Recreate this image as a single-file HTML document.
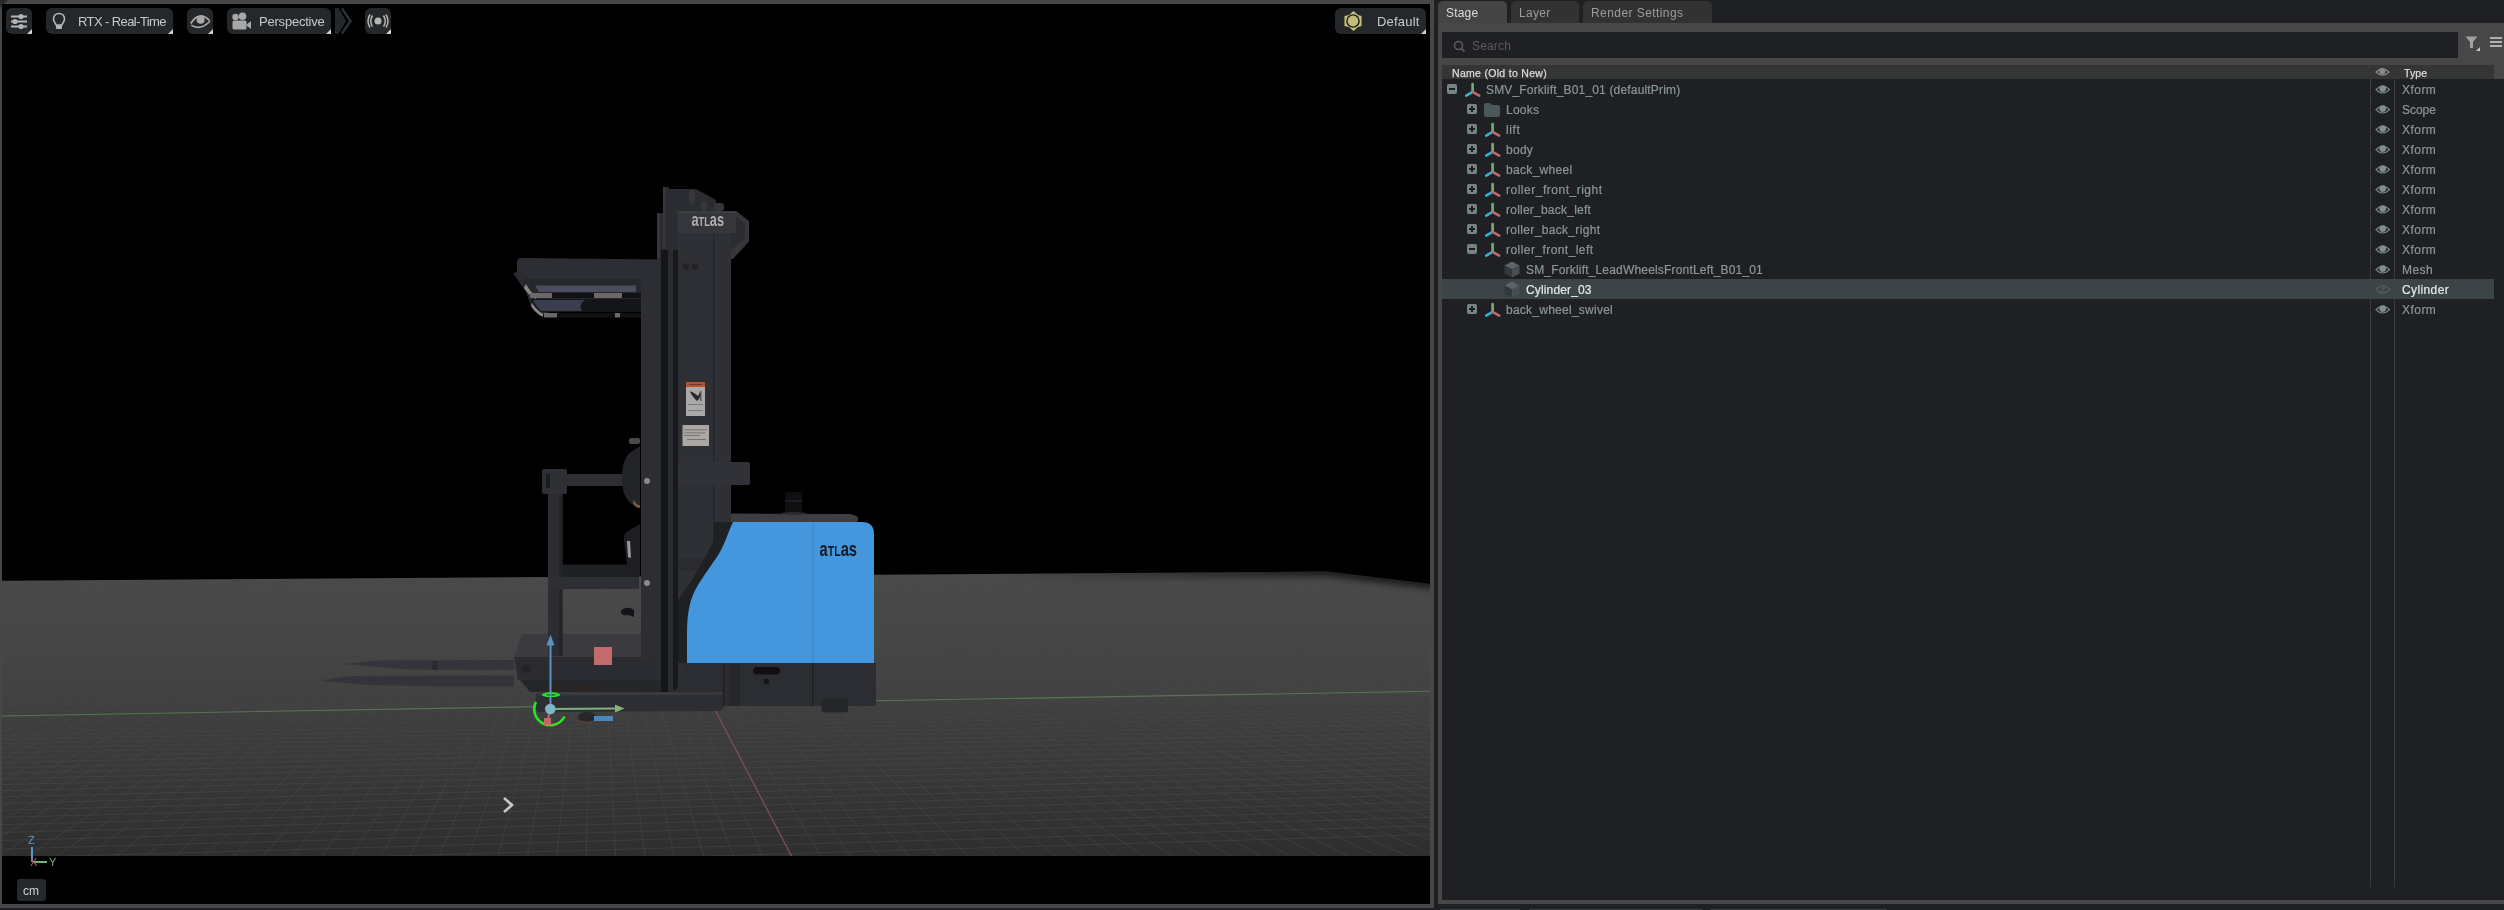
<!DOCTYPE html>
<html><head><meta charset="utf-8">
<style>
*{margin:0;padding:0;box-sizing:border-box}
html,body{width:2504px;height:910px;overflow:hidden;background:#1f2023;font-family:"Liberation Sans",sans-serif;-webkit-font-smoothing:antialiased}
.a{position:absolute}
span{will-change:transform}
#vpb{left:0;top:0;width:1434px;height:908px;background:#474747}
#vp{left:2px;top:4px;width:1428px;height:900px;background:#000;overflow:hidden}
#vp svg{position:absolute;left:0;top:0;will-change:transform}
.btn{position:absolute;top:8px;height:26px;background:#25282b;border-radius:6px}
.btn .tri{position:absolute;right:0;bottom:0;width:0;height:0;border-left:5px solid transparent;border-bottom:5px solid #d0d0d0}
.btxt{position:absolute;top:6px;font-size:13px;color:#c8c8c8;white-space:nowrap}
#pbord{left:1438px;top:23px;width:1066px;height:881px;background:#474747}
#pin{left:1442px;top:79px;width:1062px;height:821px;background:#1f2023}
.tab{position:absolute;top:1px;height:23px;border-radius:5px 5px 0 0;font-size:12px;color:#9c9c9c}
.tab span{position:absolute;top:5px}
#search{left:1442px;top:32px;width:1016px;height:26px;background:#1f2023}
#hdr{left:1442px;top:65px;width:1052px;height:14px;background:#343535}
.row{position:absolute;left:1442px;width:1052px;height:20px}
.rt{position:absolute;top:4px;font-size:12px;color:#8a9799;white-space:nowrap;-webkit-text-stroke:0.2px currentColor}
.ty{position:absolute;left:960px;top:4px;font-size:12px;color:#8a9799;-webkit-text-stroke:0.2px currentColor}
.box{position:absolute;top:5px;width:10px;height:10px;border-radius:2px;background:#768487}
.box:before{content:"";position:absolute;left:2px;top:4px;width:6px;height:2px;background:#1f2023}
.box.p:after{content:"";position:absolute;left:4px;top:2px;width:2px;height:6px;background:#1f2023}
.ic{position:absolute;top:2px}
.eye{position:absolute;left:932.5px;top:4.5px}
.sep{position:absolute;top:79px;width:1px;height:808px;background:#3a3b3d}
</style></head><body>
<div id="vpb" class="a"></div>
<svg class="a" style="left:0;top:0" width="10" height="10"><path d="M0 0 L8 0 L0 8 Z" fill="#2b2b2b"/></svg>
<div id="vp" class="a">
<svg width="1428" height="900" viewBox="2 4 1428 900">
<defs>
<linearGradient id="gg" x1="0" y1="572" x2="0" y2="856" gradientUnits="userSpaceOnUse">
<stop offset="0" stop-color="#4a4a4a"/><stop offset="0.35" stop-color="#444444"/><stop offset="1" stop-color="#2e2e2e"/>
</linearGradient>
<clipPath id="gc"><path d="M0 580.7 L1327 571.6 L1430 584 L1430 856 L0 856 Z"/></clipPath>
<linearGradient id="gmg" x1="0" y1="580" x2="0" y2="720" gradientUnits="userSpaceOnUse"><stop offset="0" stop-color="#000"/><stop offset="0.45" stop-color="#999"/><stop offset="1" stop-color="#fff"/></linearGradient>
<mask id="gm" maskUnits="userSpaceOnUse" x="0" y="0" width="1434" height="910"><rect x="0" y="0" width="1434" height="910" fill="url(#gmg)"/></mask>
<linearGradient id="edgeg" x1="1000" y1="0" x2="1330" y2="0" gradientUnits="userSpaceOnUse"><stop offset="0" stop-color="#000" stop-opacity="0"/><stop offset="1" stop-color="#000" stop-opacity="0.7"/></linearGradient>
<filter id="bl3" x="-10%" y="-200%" width="120%" height="500%"><feGaussianBlur stdDeviation="3.5"/></filter>
</defs>
<rect x="0" y="0" width="1434" height="910" fill="#000"/>
<path d="M0 580.7 L1327 571.6 L1430 584 L1430 856 L0 856 Z" fill="url(#gg)"/>
<g clip-path="url(#gc)">
<path d="M1000 574.8 L1327 571.6 L1440 585" fill="none" stroke="url(#edgeg)" stroke-width="9" filter="url(#bl3)"/>
<g mask="url(#gm)">
<path d="M0.9 580.7L-1684.6 856.0 M9.0 580.6L-1655.0 856.0 M17.1 580.6L-1625.4 856.0 M25.1 580.5L-1595.7 856.0 M33.1 580.5L-1566.1 856.0 M41.2 580.4L-1536.5 856.0 M49.2 580.4L-1506.9 856.0 M57.2 580.3L-1477.3 856.0 M65.2 580.3L-1447.7 856.0 M73.1 580.2L-1418.1 856.0 M81.1 580.1L-1388.5 856.0 M89.1 580.1L-1359.0 856.0 M97.0 580.0L-1329.4 856.0 M105.0 580.0L-1299.8 856.0 M112.9 579.9L-1270.2 856.0 M120.8 579.9L-1240.6 856.0 M128.7 579.8L-1211.1 856.0 M136.6 579.8L-1181.5 856.0 M144.5 579.7L-1151.9 856.0 M152.4 579.7L-1122.4 856.0 M160.3 579.6L-1092.8 856.0 M168.2 579.5L-1063.3 856.0 M176.0 579.5L-1033.7 856.0 M183.9 579.4L-1004.2 856.0 M191.7 579.4L-974.6 856.0 M199.5 579.3L-945.1 856.0 M207.3 579.3L-915.6 856.0 M215.1 579.2L-886.0 856.0 M222.9 579.2L-856.5 856.0 M230.7 579.1L-827.0 856.0 M238.5 579.1L-797.5 856.0 M246.3 579.0L-767.9 856.0 M254.0 579.0L-738.4 856.0 M261.8 578.9L-708.9 856.0 M269.5 578.9L-679.4 856.0 M277.3 578.8L-649.9 856.0 M285.0 578.7L-620.4 856.0 M292.7 578.7L-590.9 856.0 M300.4 578.6L-561.4 856.0 M308.1 578.6L-531.9 856.0 M315.8 578.5L-502.4 856.0 M323.4 578.5L-472.9 856.0 M331.1 578.4L-443.5 856.0 M338.8 578.4L-414.0 856.0 M346.4 578.3L-384.5 856.0 M354.0 578.3L-355.0 856.0 M361.7 578.2L-325.6 856.0 M369.3 578.2L-296.1 856.0 M376.9 578.1L-266.6 856.0 M384.5 578.1L-237.2 856.0 M392.1 578.0L-207.7 856.0 M399.7 578.0L-178.3 856.0 M407.2 577.9L-148.8 856.0 M414.8 577.9L-119.4 856.0 M422.3 577.8L-89.9 856.0 M429.9 577.8L-60.5 856.0 M437.4 577.7L-31.1 856.0 M444.9 577.6L-1.6 856.0 M452.5 577.6L27.8 856.0 M460.0 577.5L57.2 856.0 M467.5 577.5L86.6 856.0 M475.0 577.4L116.1 856.0 M482.4 577.4L145.5 856.0 M489.9 577.3L174.9 856.0 M497.4 577.3L204.3 856.0 M504.8 577.2L233.7 856.0 M512.3 577.2L263.1 856.0 M519.7 577.1L292.5 856.0 M527.1 577.1L321.9 856.0 M534.5 577.0L351.3 856.0 M542.0 577.0L380.7 856.0 M549.4 576.9L410.0 856.0 M556.7 576.9L439.4 856.0 M564.1 576.8L468.8 856.0 M571.5 576.8L498.2 856.0 M578.9 576.7L527.5 856.0 M586.2 576.7L556.9 856.0 M593.6 576.6L586.3 856.0 M600.9 576.6L615.6 856.0 M608.2 576.5L645.0 856.0 M615.6 576.5L674.3 856.0 M622.9 576.4L703.7 856.0 M630.2 576.4L733.0 856.0 M637.5 576.3L762.4 856.0 M644.7 576.3L791.7 856.0 M652.0 576.2L821.1 856.0 M659.3 576.2L850.4 856.0 M666.6 576.1L879.7 856.0 M673.8 576.1L909.1 856.0 M681.0 576.0L938.4 856.0 M688.3 576.0L967.7 856.0 M695.5 575.9L997.0 856.0 M702.7 575.9L1026.3 856.0 M709.9 575.8L1055.6 856.0 M717.1 575.8L1084.9 856.0 M724.3 575.7L1114.2 856.0 M731.5 575.7L1143.5 856.0 M738.7 575.6L1172.8 856.0 M745.8 575.6L1202.1 856.0 M753.0 575.5L1231.4 856.0 M760.1 575.5L1260.7 856.0 M767.3 575.4L1290.0 856.0 M774.4 575.4L1319.3 856.0 M781.5 575.3L1348.5 856.0 M788.7 575.3L1377.8 856.0 M795.8 575.2L1407.1 856.0 M802.9 575.2L1436.4 856.0 M810.0 575.1L1465.6 856.0 M817.0 575.1L1494.9 856.0 M824.1 575.0L1524.1 856.0 M831.2 575.0L1553.4 856.0 M838.2 575.0L1582.6 856.0 M845.3 574.9L1611.9 856.0 M852.3 574.9L1641.1 856.0 M859.3 574.8L1670.4 856.0 M866.4 574.8L1699.6 856.0 M873.4 574.7L1728.8 856.0 M880.4 574.7L1758.1 856.0 M887.4 574.6L1787.3 856.0 M894.4 574.6L1816.5 856.0 M901.4 574.5L1845.7 856.0 M908.3 574.5L1875.0 856.0 M915.3 574.4L1904.2 856.0 M922.3 574.4L1933.4 856.0 M929.2 574.3L1962.6 856.0 M936.2 574.3L1991.8 856.0 M943.1 574.2L2021.0 856.0 M950.0 574.2L2050.2 856.0 M956.9 574.1L2079.4 856.0 M963.8 574.1L2108.6 856.0 M970.8 574.0L2137.8 856.0 M977.6 574.0L2166.9 856.0 M984.5 573.9L2196.1 856.0 M991.4 573.9L2225.3 856.0 M998.3 573.9L2254.5 856.0 M1005.1 573.8L2283.6 856.0 M1012.0 573.8L2312.8 856.0 M1018.8 573.7L2342.0 856.0 M1025.7 573.7L2371.1 856.0 M1032.5 573.6L2400.3 856.0 M1039.3 573.6L2429.4 856.0 M1046.2 573.5L2458.6 856.0 M1053.0 573.5L2487.7 856.0 M1059.8 573.4L2516.9 856.0 M1066.5 573.4L2546.0 856.0 M1073.3 573.3L2575.2 856.0 M1080.1 573.3L2604.3 856.0 M1086.9 573.2L2633.4 856.0 M1093.6 573.2L2662.5 856.0 M1100.4 573.2L2691.7 856.0 M1107.1 573.1L2720.8 856.0 M1113.9 573.1L2749.9 856.0 M1120.6 573.0L2779.0 856.0 M1127.3 573.0L2808.1 856.0 M1134.0 572.9L2837.2 856.0 M1140.7 572.9L2866.3 856.0 M1147.4 572.8L2895.4 856.0 M1154.1 572.8L2924.5 856.0 M1160.8 572.7L2953.6 856.0 M1167.5 572.7L2982.7 856.0 M1174.2 572.6L3011.8 856.0 M1180.8 572.6L3040.9 856.0 M1187.5 572.6L3070.0 856.0 M1194.1 572.5L3099.0 856.0 M1200.8 572.5L3128.1 856.0 M1207.4 572.4L3157.2 856.0 M1214.0 572.4L3186.3 856.0 M1220.6 572.3L3215.3 856.0 M1227.2 572.3L3244.4 856.0 M1233.8 572.2L3273.4 856.0 M1240.4 572.2L3302.5 856.0 M1247.0 572.1L3331.5 856.0 M1253.6 572.1L3360.6 856.0 M1260.2 572.1L3389.6 856.0 M1266.7 572.0L3418.7 856.0 M1273.3 572.0L3447.7 856.0 M1279.8 571.9L3476.7 856.0 M1286.4 571.9L3505.8 856.0 M1292.9 571.8L3534.8 856.0 M1299.4 571.8L3563.8 856.0 M1305.9 571.7L3592.8 856.0 M1312.3 571.7L3621.9 856.0 M1342.3 574.5L3650.9 856.0 M1385.7 578.9L3679.9 856.0 M1431.2 583.4L3708.9 856.0" stroke="#4c4c4c" stroke-width="1" fill="none" opacity="0.5"/>
<path d="M0.0 696.7L1430.0 674.0 M0.0 693.7L1430.0 671.4 M0.0 690.9L1430.0 668.8 M0.0 688.1L1430.0 666.4 M0.0 685.4L1430.0 664.0 M0.0 682.8L1430.0 661.6 M0.0 680.2L1430.0 659.4 M0.0 677.7L1430.0 657.1 M0.0 675.3L1430.0 655.0 M0.0 672.9L1430.0 652.9 M0.0 670.6L1430.0 650.8 M0.0 668.4L1430.0 648.8 M0.0 666.2L1430.0 646.9 M0.0 664.0L1430.0 644.9" stroke="#4c4c4c" stroke-width="1" fill="none" opacity="0.12"/>
<path d="M0.0 731.1L1430.0 704.6 M0.0 727.2L1430.0 701.1 M0.0 723.3L1430.0 697.7 M0.0 719.7L1430.0 694.4 M0.0 716.1L1430.0 691.2 M0.0 712.6L1430.0 688.1 M0.0 709.2L1430.0 685.1 M0.0 705.9L1430.0 682.2 M0.0 702.8L1430.0 679.4 M0.0 699.7L1430.0 676.6" stroke="#4c4c4c" stroke-width="1" fill="none" opacity="0.25"/>
<path d="M0.0 757.7L1430.0 728.2 M0.0 752.8L1430.0 723.9 M0.0 748.2L1430.0 719.8 M0.0 743.7L1430.0 715.8 M0.0 739.4L1430.0 711.9 M0.0 735.2L1430.0 708.2" stroke="#4c4c4c" stroke-width="1" fill="none" opacity="0.38"/>
<path d="M0.0 877.2L1430.0 834.5 M0.0 867.4L1430.0 825.7 M0.0 858.0L1430.0 817.4 M0.0 849.1L1430.0 809.5 M0.0 840.6L1430.0 801.9 M0.0 832.5L1430.0 794.7 M0.0 824.7L1430.0 787.8 M0.0 817.3L1430.0 781.2 M0.0 810.2L1430.0 774.9 M0.0 803.4L1430.0 768.8 M0.0 796.8L1430.0 763.0 M0.0 790.6L1430.0 757.4 M0.0 784.6L1430.0 752.1 M0.0 778.8L1430.0 746.9 M0.0 773.2L1430.0 742.0 M0.0 767.8L1430.0 737.2 M0.0 762.6L1430.0 732.6" stroke="#4c4c4c" stroke-width="1" fill="none" opacity="0.50"/>
</g>
<line x1="0" y1="716" x2="1430" y2="691.2" stroke="#587458" stroke-width="1.1"/>
<line x1="712" y1="704" x2="791.5" y2="856" stroke="#80524d" stroke-width="1.2"/>
</g>
<!-- forks -->
<path d="M345 664 L378 660.5 L514 660 L514 670 L490 670 L408 669.5 L378 667 Z" fill="#34343a"/>
<path d="M321 680.5 L350 676 L514 675.5 L514 686.5 L440 686.5 L370 685 Z" fill="#33333a"/>
<path d="M432 661 L438 661 L438 670 L432 670 Z" fill="#2a2a2f"/>
<!-- platform underside / mechanism -->
<path d="M520 680 L662 680 L662 692 L530 692 Z" fill="#25262a"/>
<!-- operator platform -->
<path d="M522 634 L662 634 L662 657 L514 657 Z" fill="#3a3a3f"/>
<path d="M514 657 L662 657 L662 680 L518 680 Z" fill="#2b2c31"/>
<circle cx="526" cy="669" r="4" fill="#222327"/>
<!-- canopy -->
<path d="M521 258 L661 259.5 L661 279 L519 279 Q516 278 517 270 L517 263 Q517 258 521 258 Z" fill="#2d2e34"/>
<path d="M513 273 L523 271 L540 300 L548 313 L541 316 L531 306 L526 292 Z" fill="#2a2b30"/>
<path d="M523 279 L641 279 L641 300 L536 300 Q528 295 523 283 Z" fill="#27282e"/>
<path d="M535 285.5 L636 285.5 L636 292 L539 292 Z" fill="#4b4d5e"/>
<path d="M526 284 Q530 292 536 296 L536 299 Q529 296 524 288 Z" fill="#8a8888"/>
<rect x="530" y="293" width="22" height="5" fill="#6a6868"/>
<rect x="552" y="293" width="42" height="5" fill="#111114"/>
<rect x="594" y="293" width="28" height="5" fill="#6a6868"/>
<rect x="622" y="293" width="19" height="5" fill="#111114"/>
<path d="M531 299 L641 299 L641 312 L541 312 Q535 306 531 301 Z" fill="#141519"/>
<path d="M533 300 L585 300 Q578 305 582 311 L541 311 Q536 306 533 301 Z" fill="#3a3d4e"/>
<path d="M532 303 Q536 310 543 314 L543 317 Q535 313 531 306 Z" fill="#8a8888"/>
<rect x="544" y="313" width="13" height="4.5" fill="#6a6868"/>
<rect x="557" y="313" width="58" height="4.5" fill="#111114"/>
<rect x="615" y="313" width="5" height="4.5" fill="#6a6868"/>
<rect x="620" y="313" width="21" height="4.5" fill="#111114"/>
<!-- canopy post -->
<rect x="641" y="279" width="20" height="379" fill="#2d2e33"/>
<!-- gate -->
<rect x="562" y="564.5" width="77" height="12.5" fill="#1f2024"/>
<rect x="548" y="492" width="14.5" height="164" fill="#2c2d32"/>
<rect x="559" y="492" width="3.5" height="164" fill="#232428"/>
<rect x="548" y="577" width="91" height="12" fill="#2e2f34"/>
<rect x="542" y="474" width="97" height="12" fill="#2e2f34"/>
<rect x="542" y="469" width="25" height="25" rx="2" fill="#2f3035"/>
<rect x="546" y="474" width="4" height="14" fill="#1a1b1f"/>
<circle cx="647" cy="481" r="3" fill="#8a8a8a"/>
<circle cx="647" cy="583" r="3" fill="#8a8a8a"/>
<!-- seat/backrest -->
<path d="M640 446 L631 452 Q622 458 622 478 Q622 498 633 505 L640 507 Z" fill="#232428"/>
<rect x="629" y="438" width="11" height="6" rx="2" fill="#4a4a4e"/>
<path d="M634 500 Q637 506 640 505 L640 508 Q635 508 633 503 Z" fill="#7a5a3a"/>
<path d="M640 524 L628 531 Q623 534 624 540 L628 572 L640 576 Z" fill="#1e1f23"/>
<path d="M627 541 L630 541 L631 558 L628 557 Z" fill="#9a9a9a"/>
<path d="M621 611 Q624 607 630 608 L634 610 L634 617 L628 615 Q623 616 621 613 Z" fill="#141518"/>
<!-- mast -->
<path d="M657 213 L663 213 L663 187 L669 187 L669 189 L696 189 L716 200 L716 211 L736 211 L749 221 L749 241 L733 259 L731 259 L731 692 L662 692 L662 660 L657 660 Z" fill="#2b2c31"/>
<rect x="661" y="250" width="7" height="442" fill="#141518"/>
<rect x="668" y="250" width="5" height="442" fill="#2a2b30"/>
<rect x="673" y="250" width="5" height="440" fill="#18191c"/>
<rect x="657" y="213" width="3" height="45" fill="#35363b"/>
<rect x="663" y="187" width="2.5" height="60" fill="#36373c"/>
<rect x="689" y="190" width="6" height="14" rx="3" fill="#36373c"/>
<rect x="701" y="202" width="6" height="10" rx="3" fill="#36373c"/>
<rect x="714" y="203" width="10" height="8" rx="3" fill="#34353a"/>
<path d="M736 211 L749 221.5 L749 241.5 L733 258.5 L731 258.5 L731 250 L745 238 L745 224 L736 216 Z" fill="#36373c"/>
<rect x="678" y="233" width="53" height="459" fill="#2f3035"/>
<rect x="713" y="233" width="1.2" height="330" fill="#23242a"/>
<rect x="677.5" y="211.5" width="58.5" height="21.5" fill="#35363b"/>
<rect x="677.5" y="211.5" width="58.5" height="1.2" fill="#45464b"/>
<text x="691.5" y="226" font-family="Liberation Sans" font-weight="bold" fill="#b0b0b0" textLength="32.5" lengthAdjust="spacingAndGlyphs"><tspan font-size="19">a</tspan><tspan font-size="13.7">TL</tspan><tspan font-size="19">as</tspan></text>
<circle cx="686" cy="266.5" r="3.3" fill="#222327"/>
<circle cx="695" cy="266.5" r="3.3" fill="#222327"/>
<!-- labels -->
<rect x="686" y="382" width="19" height="34" fill="#a9a9a9"/>
<rect x="686" y="382" width="19" height="5" fill="#b5542c"/>
<rect x="689" y="384" width="13" height="1" fill="#3a2a20" opacity="0.6"/>
<path d="M690 391 L694 393 L698 396 L700 392 L701 394 L699 399 L697 401 L694 398 L691 394 Z" fill="#2a2a2a"/>
<rect x="700" y="391" width="1.5" height="10" fill="#555"/>
<rect x="688" y="404" width="15" height="1" fill="#7a7a7a"/>
<rect x="688" y="410" width="15" height="1" fill="#7a7a7a"/>
<rect x="682.5" y="425" width="26.5" height="21" fill="#aba7a3"/>
<rect x="684" y="429.5" width="23" height="0.8" fill="#6a6a6a"/>
<rect x="684" y="432.5" width="21" height="0.8" fill="#6a6a6a"/>
<rect x="684" y="435" width="16" height="0.8" fill="#6a6a6a"/>
<rect x="687" y="439" width="19" height="0.8" fill="#6a6a6a"/>
<!-- cross bracket -->
<rect x="678" y="462" width="72" height="23" rx="2" fill="#313237"/>
<rect x="678" y="558" width="43" height="13" fill="#2a2b30"/>
<!-- blue body top & knob -->
<path d="M731 513.5 L850 514 Q860 516 858 520 L857 522 L731 522 Z" fill="#3e3e42"/>
<rect x="785" y="492" width="17" height="21" rx="3" fill="#0f0f12"/>
<rect x="785" y="500" width="17" height="2" fill="#1e1e22"/>
<ellipse cx="793.5" cy="513.5" rx="13" ry="1.5" fill="#2a2b30"/>
<!-- base -->
<path d="M685 663 L876 663 L876 706 L724 706 L724 708 L676 708 L676 691 Z" fill="#2c2d32"/>
<rect x="729" y="664" width="11" height="42" fill="#26272b"/>
<path d="M714 522 L733 522 C729 530 726 541 720 552 C714 562 708 569 698 585 C690 598 687 612 687 635 L687 663 L678 663 L678 600 Q700 570 714 540 Z" fill="#1f2024"/>
<rect x="723" y="664" width="1.5" height="42" fill="#1e1f23"/>
<rect x="812" y="664" width="1.5" height="42" fill="#1e1f23"/>
<rect x="753" y="667" width="27" height="7.5" rx="3.7" fill="#0e0f12"/>
<circle cx="766.4" cy="681.4" r="2.8" fill="#141518"/>
<rect x="821.5" y="698.5" width="26.5" height="14" rx="3" fill="#25262a"/>
<!-- blue body -->
<path d="M733 522 L862 522 Q874 522 874 534 L874 663 L687 663 L687 635 C687 612 690 598 698 585 C708 569 714 562 720 552 C726 541 729 530 733 522 Z" fill="#4497dd"/>
<rect x="812.5" y="522" width="1.2" height="141" fill="#3a86c8"/>
<text x="819.5" y="555.7" font-family="Liberation Sans" font-weight="bold" fill="#141922" textLength="37.5" lengthAdjust="spacingAndGlyphs"><tspan font-size="20.5">a</tspan><tspan font-size="14.8">TL</tspan><tspan font-size="20.5">as</tspan></text>
<!-- wheels -->
<ellipse cx="554" cy="688" rx="9" ry="4" fill="#2a241f"/>
<ellipse cx="587" cy="688" rx="9" ry="4" fill="#2a241f"/>
<ellipse cx="587" cy="717" rx="9" ry="5" fill="#26272b"/>
<path d="M580 721 Q587 724 594 721" fill="none" stroke="#5a4330" stroke-width="1"/>
<!-- outrigger leg -->
<path d="M538 693 L722 692 L722 711 L540 712 Q536 712 536 708 L536 697 Q536 693 538 693 Z" fill="#2d2e33"/>
<path d="M538 693 L722 692 L722 694.5 L537 695.5 Z" fill="#3a3b40"/>

<!-- gizmo -->
<path d="M536 702 A15.5 15.5 0 1 0 564.5 716.5" fill="none" stroke="#22e822" stroke-width="2.6"/>
<path d="M542.5 695 Q551 691 559.5 695" fill="none" stroke="#22e822" stroke-width="2.2"/>
<path d="M542.5 695 Q551 698 559.5 695" fill="none" stroke="#22e822" stroke-width="1.5"/>
<line x1="550.5" y1="644" x2="550.5" y2="709" stroke="#5b93c2" stroke-width="2"/>
<path d="M546.5 645.5 L550.5 634.5 L554.5 645.5 Z" fill="#5b93c2"/>
<line x1="550" y1="709" x2="616" y2="708.5" stroke="#84b07c" stroke-width="1.8"/>
<path d="M615 704.5 L624.5 708.5 L615 712.5 Z" fill="#84b07c"/>
<rect x="544" y="718" width="7" height="7" fill="#c26868"/>
<line x1="550" y1="710" x2="548" y2="719" stroke="#c26868" stroke-width="1.8"/>
<circle cx="550.3" cy="709" r="5.3" fill="#7bb7c6"/>
<rect x="594" y="716" width="19" height="5" fill="#4a87bb"/>
<!-- red box on platform -->
<rect x="594" y="647" width="18" height="18" fill="#c36a6a"/>

<!-- chevron -->
<path d="M504 798 L512 805 L504 812" fill="none" stroke="#c8c8c8" stroke-width="2.6"/>
<!-- axis gizmo -->
<text x="28" y="843.5" font-size="11" fill="#5b93c7" font-family="Liberation Sans">Z</text>
<rect x="31" y="847" width="2" height="15" fill="#5b93c7"/>
<rect x="33" y="861" width="14" height="2" fill="#78b070"/>
<text x="49" y="866" font-size="11" fill="#78b070" font-family="Liberation Sans">Y</text>
<text x="30" y="866" font-size="11" fill="#c06060" font-family="Liberation Sans">X</text>
<rect x="17" y="879" width="29" height="22" rx="3" fill="#25292c"/>
<text x="23" y="895" font-size="12" fill="#d0d0d0" font-family="Liberation Sans">cm</text>
</svg>
</div>

<!-- toolbar -->
<div class="btn" style="left:6px;width:26px"><div class="tri"></div>
<svg class="a" style="left:4px;top:5px" width="18" height="16" viewBox="0 0 18 16"><g fill="#b4b4b4"><rect x="1" y="2.5" width="16" height="2"/><rect x="1" y="7.5" width="16" height="2"/><rect x="1" y="12.5" width="16" height="2"/><circle cx="11" cy="3.5" r="2.6"/><circle cx="5" cy="8.5" r="2.6"/><circle cx="11" cy="13.5" r="2.6"/></g></svg></div>
<div class="btn" style="left:46px;width:127px"><div class="tri"></div>
<svg class="a" style="left:5px;top:4px" width="16" height="19" viewBox="0 0 16 19"><path d="M8 1.5 C4.5 1.5 2.5 4 2.5 7 C2.5 9.5 4.5 11 5 13 L11 13 C11.5 11 13.5 9.5 13.5 7 C13.5 4 11.5 1.5 8 1.5 Z" fill="none" stroke="#b4b4b4" stroke-width="1.6"/><rect x="5" y="13" width="6" height="4" rx="1" fill="#b4b4b4"/></svg>
<span class="btxt" style="left:32px;letter-spacing:-0.59px">RTX - Real-Time</span></div>
<div class="btn" style="left:187px;width:26px"><div class="tri"></div>
<svg class="a" style="left:0;top:0" width="26" height="26" viewBox="0 0 26 26"><circle cx="13.6" cy="11.8" r="4" fill="#a8a8a8"/><path d="M3.8 15.5 Q12 2 22.6 12.6" fill="none" stroke="#a8a8a8" stroke-width="1.8"/><path d="M4.2 17.2 Q13 23 23 13.2" fill="none" stroke="#a8a8a8" stroke-width="1.6"/></svg></div>
<div class="btn" style="left:227px;width:104px"><div class="tri"></div>
<svg class="a" style="left:3px;top:4px" width="22" height="19" viewBox="0 0 22 19"><circle cx="5.5" cy="5" r="3.2" fill="#a8a8a8"/><circle cx="12.5" cy="4.3" r="3.8" fill="#a8a8a8"/><rect x="2.5" y="8.5" width="14" height="9" rx="1.5" fill="#a8a8a8"/><path d="M16 13 L21 9 L21 17 Z" fill="#a8a8a8"/></svg>
<span class="btxt" style="left:32px;letter-spacing:-0.21px">Perspective</span></div>
<svg class="a" style="left:334px;top:8px" width="20" height="26" viewBox="0 0 20 26"><path d="M1 0 L4.5 0 L12 13 L4.5 26 L1 26 Z" fill="#25282b"/><path d="M8 0.5 L16.5 13 L8 25.5" fill="none" stroke="#2c2f32" stroke-width="2.6"/></svg>
<div class="btn" style="left:365px;width:26px"><div class="tri"></div>
<svg class="a" style="left:2px;top:6px" width="22" height="14" viewBox="0 0 22 14"><circle cx="11" cy="7" r="3.5" fill="#b4b4b4"/><path d="M5.5 1.5 Q2 7 5.5 12.5 M16.5 1.5 Q20 7 16.5 12.5 M3 0.5 Q-1 7 3 13.5 M19 0.5 Q23 7 19 13.5" fill="none" stroke="#b4b4b4" stroke-width="1.5"/></svg></div>
<div class="btn" style="left:1335px;width:91px"><div class="tri"></div>
<svg class="a" style="left:8px;top:2px" width="20" height="22" viewBox="0 0 20 22"><path d="M10.5 1 L15 5 L18.5 6 L18.5 16 L15 17 L10.5 21 L6 17 L1.5 16 L1.5 6 L6 5 Z" fill="#c9c27a"/><circle cx="10" cy="11" r="6.8" fill="#1a1c1e"/><circle cx="10" cy="11" r="5.4" fill="#c2bc78"/></svg>
<span class="btxt" style="left:42px;letter-spacing:0.19px">Default</span></div>

<!-- panel -->
<div class="tab" style="left:1438px;width:69px;background:#444444;color:#dcdcdc"><span style="left:8px;letter-spacing:0.2px">Stage</span></div>
<div class="tab" style="left:1511px;width:68px;background:#323232"><span style="left:8px;letter-spacing:0.28px">Layer</span></div>
<div class="tab" style="left:1583px;width:129px;background:#323232"><span style="left:8px;letter-spacing:0.43px">Render Settings</span></div>
<div id="pbord" class="a"></div>
<div id="pin" class="a"></div>
<div id="search" class="a"></div>
<div id="hdr" class="a"></div>
<div class="sep" style="left:2370px"></div><div class="sep" style="left:2394px"></div>
<svg class="a" style="left:1453px;top:40px" width="13" height="13" viewBox="0 0 13 13"><circle cx="5.5" cy="5.5" r="4" fill="none" stroke="#5a5a5a" stroke-width="1.6"/><line x1="8.5" y1="8.5" x2="11.5" y2="11.5" stroke="#5a5a5a" stroke-width="1.8"/></svg>
<span class="a" style="left:1472px;top:39px;font-size:12px;color:#5a5a5a;letter-spacing:0.17px">Search</span>
<svg class="a" style="left:2465px;top:36px" width="16" height="15" viewBox="0 0 16 15"><path d="M0.5 0.5 L12.5 0.5 L8 6 L8 12 L5 12 L5 6 Z" fill="#a0a0a0"/><path d="M15 11 L15 15 L11 15 Z" fill="#c8c8c8"/></svg>
<svg class="a" style="left:2490px;top:37px" width="12" height="10" viewBox="0 0 12 10"><rect y="0" width="12" height="2" fill="#b0b0b0"/><rect y="4" width="12" height="2" fill="#b0b0b0"/><rect y="8" width="12" height="2" fill="#b0b0b0"/></svg>
<span class="a" style="left:1452px;top:67px;font-size:10.5px;color:#dedede;letter-spacing:0.3px;-webkit-text-stroke:0.25px #dedede">Name (Old to New)</span>
<svg class="a" style="left:2375px;top:67px" width="15" height="10" viewBox="0 0 15 10"><path d="M1 5 Q7.5 -1.2 14 5 Q7.5 11.2 1 5 Z" fill="none" stroke="#8a8a8a" stroke-width="1.1"/><circle cx="7.3" cy="4.2" r="3.1" fill="#8a8a8a"/></svg>
<span class="a" style="left:2404px;top:67px;font-size:10.5px;color:#dedede;letter-spacing:0.1px;-webkit-text-stroke:0.25px #dedede">Type</span>
<div class="row" style="top:79px;"><div class="box" style="left:5px"></div><svg class="ic" style="left:21px" width="18" height="18" viewBox="0 0 18 18"><g stroke-width="2.6" stroke-linecap="round"><line x1="9.6" y1="10.8" x2="9.6" y2="3" stroke="#74b07c"/><line x1="9.6" y1="10.8" x2="3.2" y2="14.6" stroke="#35b1d5"/><line x1="9.6" y1="10.8" x2="16.2" y2="14.6" stroke="#c4686a"/></g></svg><span class="rt" style="left:44px;color:#8a9799;letter-spacing:0.17px">SMV_Forklift_B01_01 (defaultPrim)</span><svg class="eye" width="16" height="11" viewBox="0 0 16 11"><path d="M1 5.6 Q7.5 -1.2 14.5 5.6 Q7.5 12.4 1 5.6 Z" fill="none" stroke="#7f8e91" stroke-width="1.2"/><circle cx="7.7" cy="4.6" r="3.4" fill="#7f8e91"/></svg><span class="ty" style="color:#8a9799;letter-spacing:0.46px">Xform</span></div>
<div class="row" style="top:99px;"><div class="box p" style="left:25px"></div><svg class="ic" style="left:41px;top:3px" width="18" height="16" viewBox="0 0 18 16"><path d="M1 3 Q1 1 3 1 L7 1 L9 3 L15 3 Q17 3 17 5 L17 13 Q17 15 15 15 L3 15 Q1 15 1 13 Z" fill="#4b585b"/></svg><span class="rt" style="left:64px;color:#8a9799;letter-spacing:0.22px">Looks</span><svg class="eye" width="16" height="11" viewBox="0 0 16 11"><path d="M1 5.6 Q7.5 -1.2 14.5 5.6 Q7.5 12.4 1 5.6 Z" fill="none" stroke="#7f8e91" stroke-width="1.2"/><circle cx="7.7" cy="4.6" r="3.4" fill="#7f8e91"/></svg><span class="ty" style="color:#8a9799;letter-spacing:-0.04px">Scope</span></div>
<div class="row" style="top:119px;"><div class="box p" style="left:25px"></div><svg class="ic" style="left:41px" width="18" height="18" viewBox="0 0 18 18"><g stroke-width="2.6" stroke-linecap="round"><line x1="9.6" y1="10.8" x2="9.6" y2="3" stroke="#74b07c"/><line x1="9.6" y1="10.8" x2="3.2" y2="14.6" stroke="#35b1d5"/><line x1="9.6" y1="10.8" x2="16.2" y2="14.6" stroke="#c4686a"/></g></svg><span class="rt" style="left:64px;color:#8a9799;letter-spacing:0.58px">lift</span><svg class="eye" width="16" height="11" viewBox="0 0 16 11"><path d="M1 5.6 Q7.5 -1.2 14.5 5.6 Q7.5 12.4 1 5.6 Z" fill="none" stroke="#7f8e91" stroke-width="1.2"/><circle cx="7.7" cy="4.6" r="3.4" fill="#7f8e91"/></svg><span class="ty" style="color:#8a9799;letter-spacing:0.46px">Xform</span></div>
<div class="row" style="top:139px;"><div class="box p" style="left:25px"></div><svg class="ic" style="left:41px" width="18" height="18" viewBox="0 0 18 18"><g stroke-width="2.6" stroke-linecap="round"><line x1="9.6" y1="10.8" x2="9.6" y2="3" stroke="#74b07c"/><line x1="9.6" y1="10.8" x2="3.2" y2="14.6" stroke="#35b1d5"/><line x1="9.6" y1="10.8" x2="16.2" y2="14.6" stroke="#c4686a"/></g></svg><span class="rt" style="left:64px;color:#8a9799;letter-spacing:0.28px">body</span><svg class="eye" width="16" height="11" viewBox="0 0 16 11"><path d="M1 5.6 Q7.5 -1.2 14.5 5.6 Q7.5 12.4 1 5.6 Z" fill="none" stroke="#7f8e91" stroke-width="1.2"/><circle cx="7.7" cy="4.6" r="3.4" fill="#7f8e91"/></svg><span class="ty" style="color:#8a9799;letter-spacing:0.46px">Xform</span></div>
<div class="row" style="top:159px;"><div class="box p" style="left:25px"></div><svg class="ic" style="left:41px" width="18" height="18" viewBox="0 0 18 18"><g stroke-width="2.6" stroke-linecap="round"><line x1="9.6" y1="10.8" x2="9.6" y2="3" stroke="#74b07c"/><line x1="9.6" y1="10.8" x2="3.2" y2="14.6" stroke="#35b1d5"/><line x1="9.6" y1="10.8" x2="16.2" y2="14.6" stroke="#c4686a"/></g></svg><span class="rt" style="left:64px;color:#8a9799;letter-spacing:0.32px">back_wheel</span><svg class="eye" width="16" height="11" viewBox="0 0 16 11"><path d="M1 5.6 Q7.5 -1.2 14.5 5.6 Q7.5 12.4 1 5.6 Z" fill="none" stroke="#7f8e91" stroke-width="1.2"/><circle cx="7.7" cy="4.6" r="3.4" fill="#7f8e91"/></svg><span class="ty" style="color:#8a9799;letter-spacing:0.46px">Xform</span></div>
<div class="row" style="top:179px;"><div class="box p" style="left:25px"></div><svg class="ic" style="left:41px" width="18" height="18" viewBox="0 0 18 18"><g stroke-width="2.6" stroke-linecap="round"><line x1="9.6" y1="10.8" x2="9.6" y2="3" stroke="#74b07c"/><line x1="9.6" y1="10.8" x2="3.2" y2="14.6" stroke="#35b1d5"/><line x1="9.6" y1="10.8" x2="16.2" y2="14.6" stroke="#c4686a"/></g></svg><span class="rt" style="left:64px;color:#8a9799;letter-spacing:0.51px">roller_front_right</span><svg class="eye" width="16" height="11" viewBox="0 0 16 11"><path d="M1 5.6 Q7.5 -1.2 14.5 5.6 Q7.5 12.4 1 5.6 Z" fill="none" stroke="#7f8e91" stroke-width="1.2"/><circle cx="7.7" cy="4.6" r="3.4" fill="#7f8e91"/></svg><span class="ty" style="color:#8a9799;letter-spacing:0.46px">Xform</span></div>
<div class="row" style="top:199px;"><div class="box p" style="left:25px"></div><svg class="ic" style="left:41px" width="18" height="18" viewBox="0 0 18 18"><g stroke-width="2.6" stroke-linecap="round"><line x1="9.6" y1="10.8" x2="9.6" y2="3" stroke="#74b07c"/><line x1="9.6" y1="10.8" x2="3.2" y2="14.6" stroke="#35b1d5"/><line x1="9.6" y1="10.8" x2="16.2" y2="14.6" stroke="#c4686a"/></g></svg><span class="rt" style="left:64px;color:#8a9799;letter-spacing:0.23px">roller_back_left</span><svg class="eye" width="16" height="11" viewBox="0 0 16 11"><path d="M1 5.6 Q7.5 -1.2 14.5 5.6 Q7.5 12.4 1 5.6 Z" fill="none" stroke="#7f8e91" stroke-width="1.2"/><circle cx="7.7" cy="4.6" r="3.4" fill="#7f8e91"/></svg><span class="ty" style="color:#8a9799;letter-spacing:0.46px">Xform</span></div>
<div class="row" style="top:219px;"><div class="box p" style="left:25px"></div><svg class="ic" style="left:41px" width="18" height="18" viewBox="0 0 18 18"><g stroke-width="2.6" stroke-linecap="round"><line x1="9.6" y1="10.8" x2="9.6" y2="3" stroke="#74b07c"/><line x1="9.6" y1="10.8" x2="3.2" y2="14.6" stroke="#35b1d5"/><line x1="9.6" y1="10.8" x2="16.2" y2="14.6" stroke="#c4686a"/></g></svg><span class="rt" style="left:64px;color:#8a9799;letter-spacing:0.33px">roller_back_right</span><svg class="eye" width="16" height="11" viewBox="0 0 16 11"><path d="M1 5.6 Q7.5 -1.2 14.5 5.6 Q7.5 12.4 1 5.6 Z" fill="none" stroke="#7f8e91" stroke-width="1.2"/><circle cx="7.7" cy="4.6" r="3.4" fill="#7f8e91"/></svg><span class="ty" style="color:#8a9799;letter-spacing:0.46px">Xform</span></div>
<div class="row" style="top:239px;"><div class="box" style="left:25px"></div><svg class="ic" style="left:41px" width="18" height="18" viewBox="0 0 18 18"><g stroke-width="2.6" stroke-linecap="round"><line x1="9.6" y1="10.8" x2="9.6" y2="3" stroke="#74b07c"/><line x1="9.6" y1="10.8" x2="3.2" y2="14.6" stroke="#35b1d5"/><line x1="9.6" y1="10.8" x2="16.2" y2="14.6" stroke="#c4686a"/></g></svg><span class="rt" style="left:64px;color:#8a9799;letter-spacing:0.44px">roller_front_left</span><svg class="eye" width="16" height="11" viewBox="0 0 16 11"><path d="M1 5.6 Q7.5 -1.2 14.5 5.6 Q7.5 12.4 1 5.6 Z" fill="none" stroke="#7f8e91" stroke-width="1.2"/><circle cx="7.7" cy="4.6" r="3.4" fill="#7f8e91"/></svg><span class="ty" style="color:#8a9799;letter-spacing:0.46px">Xform</span></div>
<div class="row" style="top:259px;"><svg class="ic" style="left:61px;top:1px" width="18" height="18" viewBox="0 0 18 18"><path d="M9 1.5 L16.5 5.5 L9 9.5 L1.5 5.5 Z" fill="#5c6468"/><path d="M1.5 5.5 L9 9.5 L9 17.5 L1.5 13.5 Z" fill="#2f3a3f"/><path d="M16.5 5.5 L9 9.5 L9 17.5 L16.5 13.5 Z" fill="#474f53"/></svg><span class="rt" style="left:84px;color:#8a9799;letter-spacing:0.18px">SM_Forklift_LeadWheelsFrontLeft_B01_01</span><svg class="eye" width="16" height="11" viewBox="0 0 16 11"><path d="M1 5.6 Q7.5 -1.2 14.5 5.6 Q7.5 12.4 1 5.6 Z" fill="none" stroke="#7f8e91" stroke-width="1.2"/><circle cx="7.7" cy="4.6" r="3.4" fill="#7f8e91"/></svg><span class="ty" style="color:#8a9799;letter-spacing:0.45px">Mesh</span></div>
<div class="row" style="top:279px;background:#3d4447;"><svg class="ic" style="left:61px;top:1px" width="18" height="18" viewBox="0 0 18 18"><path d="M9 1.5 L16.5 5.5 L9 9.5 L1.5 5.5 Z" fill="#5c6468"/><path d="M1.5 5.5 L9 9.5 L9 17.5 L1.5 13.5 Z" fill="#2f3a3f"/><path d="M16.5 5.5 L9 9.5 L9 17.5 L16.5 13.5 Z" fill="#474f53"/></svg><span class="rt" style="left:84px;color:#e4eaea;letter-spacing:0.15px">Cylinder_03</span><svg class="eye" width="16" height="11" viewBox="0 0 16 11"><path d="M1 5.5 Q8 -1.5 15 5.5 Q8 12.5 1 5.5 Z" fill="none" stroke="#55595a" stroke-width="1.3"/><line x1="10" y1="1" x2="6" y2="10" stroke="#55595a" stroke-width="1.3"/></svg><span class="ty" style="color:#e4eaea;letter-spacing:0.38px">Cylinder</span></div>
<div class="row" style="top:299px;"><div class="box p" style="left:25px"></div><svg class="ic" style="left:41px" width="18" height="18" viewBox="0 0 18 18"><g stroke-width="2.6" stroke-linecap="round"><line x1="9.6" y1="10.8" x2="9.6" y2="3" stroke="#74b07c"/><line x1="9.6" y1="10.8" x2="3.2" y2="14.6" stroke="#35b1d5"/><line x1="9.6" y1="10.8" x2="16.2" y2="14.6" stroke="#c4686a"/></g></svg><span class="rt" style="left:64px;color:#8a9799;letter-spacing:0.25px">back_wheel_swivel</span><svg class="eye" width="16" height="11" viewBox="0 0 16 11"><path d="M1 5.6 Q7.5 -1.2 14.5 5.6 Q7.5 12.4 1 5.6 Z" fill="none" stroke="#7f8e91" stroke-width="1.2"/><circle cx="7.7" cy="4.6" r="3.4" fill="#7f8e91"/></svg><span class="ty" style="color:#8a9799;letter-spacing:0.46px">Xform</span></div>
<div class="a" style="left:1440px;top:909px;width:80px;height:1px;background:#3c3d3f"></div>
<div class="a" style="left:1529px;top:909px;width:173px;height:1px;background:#3c3d3f"></div>
<div class="a" style="left:1710px;top:909px;width:177px;height:1px;background:#3c3d3f"></div>
</body></html>
